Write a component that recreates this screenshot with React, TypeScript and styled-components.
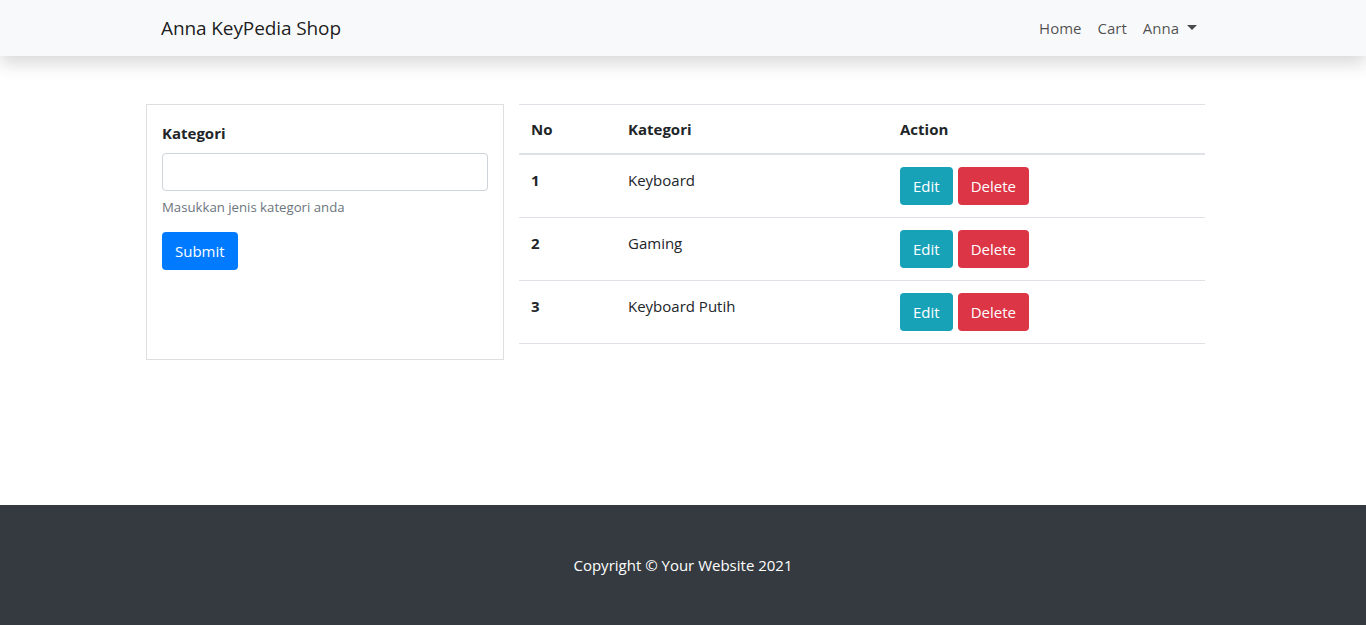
import React from "react";
import styled, { createGlobalStyle } from "styled-components";

const Global = createGlobalStyle`
  * { box-sizing: border-box; }
  html, body { margin: 0; padding: 0; }
  body {
    font-family: "Open Sans", "Noto Sans", sans-serif;
    font-size: 16px;
    line-height: 1.5;
    color: #212529;
    background: #fff;
  }
`;

const Page = styled.div`
  display: flex;
  flex-direction: column;
  min-height: 625px;
`;

const NavBar = styled.nav`
  height: 56px;
  background: #f8f9fa;
  box-shadow: 0 0.5rem 1rem rgba(0, 0, 0, 0.15);
  display: flex;
  align-items: center;
  justify-content: space-between;
  padding: 0 161px 0 161px;
  position: relative;
  z-index: 1;
`;

const Brand = styled.a`
  font-size: 19px;
  color: rgba(0, 0, 0, 0.9);
  text-decoration: none;
  line-height: 30px;
  letter-spacing: -0.1px;
`;

const NavList = styled.ul`
  display: flex;
  list-style: none;
  margin: 0;
  padding: 0;
`;

const NavLink = styled.a<{ $toggle?: boolean }>`
  display: block;
  padding: 8px 8px;
  font-size: 15px;
  color: rgba(0, 0, 0, 0.7);
  text-decoration: none;
  ${(p) =>
    p.$toggle &&
    `
    &::after {
      content: "";
      display: inline-block;
      margin-left: 8px;
      vertical-align: 4px;
      border-top: 5px solid;
      border-right: 5px solid transparent;
      border-left: 5px solid transparent;
      border-bottom: 0;
    }
  `}
`;

const Main = styled.main`
  height: 449px;
  padding: 48px 161px 0 146px;
  display: flex;
  align-items: flex-start;
  gap: 15px;
`;

const Card = styled.div`
  width: 358px;
  height: 256px;
  border: 1px solid rgba(0, 0, 0, 0.125);
  padding: 16px 15px;
`;

const Label = styled.label`
  display: block;
  font-weight: 700;
  font-size: 15px;
  line-height: 24px;
  margin-bottom: 8px;
`;

const Input = styled.input`
  display: block;
  width: 100%;
  height: 38px;
  border: 1px solid #ced4da;
  border-radius: 4px;
  padding: 6px 12px;
  font: inherit;
`;

const Help = styled.small`
  display: block;
  margin-top: 6px;
  font-size: 13.2px;
  line-height: 21px;
  color: #6c757d;
`;

const Button = styled.button<{ $variant: "primary" | "info" | "danger" }>`
  height: 38px;
  padding: 0 12px;
  border: 1px solid transparent;
  border-radius: 4px;
  font-family: inherit;
  font-size: 15px;
  color: #fff;
  background: ${(p) =>
    p.$variant === "primary" ? "#007bff" : p.$variant === "info" ? "#17a2b8" : "#dc3545"};
`;

const SubmitButton = styled(Button)`
  margin-top: 14px;
`;

const Table = styled.table`
  flex: 1;
  border-collapse: collapse;
  font-size: 15px;
  line-height: 24px;
`;

const Th = styled.th<{ $w?: number }>`
  text-align: left;
  padding: 12px;
  font-weight: 700;
  border-top: 1px solid #dee2e6;
  border-bottom: 2px solid #dee2e6;
  vertical-align: bottom;
  width: ${(p) => (p.$w ? `${p.$w}px` : "auto")};
`;

const Td = styled.td<{ $bold?: boolean }>`
  padding: 12px;
  border-top: 1px solid #dee2e6;
  vertical-align: top;
  font-weight: ${(p) => (p.$bold ? 700 : 400)};
`;

const TextCell = styled(Td)`
  padding-top: 13px;
`;

const Row = styled.tr`
  border-bottom: 1px solid #dee2e6;
`;

const Actions = styled.div`
  display: flex;
  gap: 5px;
`;

const Footer = styled.footer`
  background: #343a40;
  height: 120px;
  display: flex;
  align-items: center;
  justify-content: center;
  color: #fff;
  font-size: 15px;
`;

const rows = [
  { no: 1, name: "Keyboard" },
  { no: 2, name: "Gaming" },
  { no: 3, name: "Keyboard Putih" },
];

export default function App() {
  return (
    <Page>
      <Global />
      <NavBar>
        <Brand href="#">Anna KeyPedia Shop</Brand>
        <NavList>
          <li><NavLink href="#">Home</NavLink></li>
          <li><NavLink href="#">Cart</NavLink></li>
          <li><NavLink href="#" $toggle>Anna</NavLink></li>
        </NavList>
      </NavBar>
      <Main>
        <Card>
          <Label>Kategori</Label>
          <Input type="text" />
          <Help>Masukkan jenis kategori anda</Help>
          <SubmitButton $variant="primary">Submit</SubmitButton>
        </Card>
        <Table>
          <thead>
            <tr>
              <Th $w={97}>No</Th>
              <Th $w={272}>Kategori</Th>
              <Th>Action</Th>
            </tr>
          </thead>
          <tbody>
            {rows.map((r) => (
              <Row key={r.no}>
                <TextCell $bold>{r.no}</TextCell>
                <TextCell>{r.name}</TextCell>
                <Td>
                  <Actions>
                    <Button $variant="info">Edit</Button>
                    <Button $variant="danger">Delete</Button>
                  </Actions>
                </Td>
              </Row>
            ))}
          </tbody>
        </Table>
      </Main>
      <Footer>Copyright © Your Website 2021</Footer>
    </Page>
  );
}
